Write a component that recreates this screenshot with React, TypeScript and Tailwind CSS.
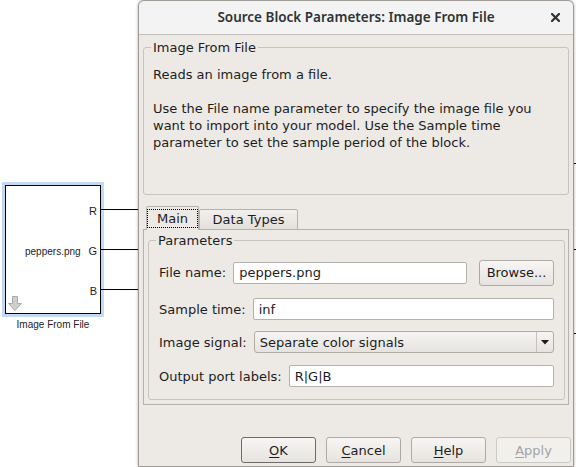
import React from "react";

const btn =
  "flex h-[26px] w-[75px] items-center justify-center rounded-[3px] border bg-gradient-to-b from-[#f7f6f4] to-[#e6e3df]";

function BlockArrow() {
  return (
    <svg width="14" height="15" viewBox="0 0 14 15">
      <path
        d="M4.5 0.5 H9.5 V7.5 H13.5 L7 14.5 L0.5 7.5 H4.5 Z"
        fill="#cfcfcf"
        stroke="#a9a9a9"
        strokeWidth="1"
      />
    </svg>
  );
}

function ImageFromFileBlock() {
  return (
    <div className="absolute left-[5px] top-[185px] flex flex-col items-center font-['Liberation_Sans',Arial,sans-serif] text-[10px] text-[#222]">
      <div className="relative h-[129px] w-[96px] border border-black bg-white ring-[3px] ring-[#c4daf4]">
        <span className="absolute right-[3px] top-[17px] text-[11px]">R</span>
        <span className="absolute right-[3px] top-[57px] text-[11px]">G</span>
        <span className="absolute right-[3px] top-[97px] text-[11px]">B</span>
        <span className="absolute left-[19px] top-[58px]">peppers.png</span>
        <div className="absolute bottom-[2px] left-[2px]">
          <BlockArrow />
        </div>
      </div>
      <div className="mt-[5px] leading-[12px]">Image From File</div>
    </div>
  );
}

function Row({ label, children, className = "" }: { label: string; children: React.ReactNode; className?: string }) {
  return (
    <div className={"flex items-center gap-[7px] " + className}>
      <span className="whitespace-nowrap">{label}</span>
      {children}
    </div>
  );
}

function Field({ value }: { value: string }) {
  return (
    <div className="flex h-[22px] min-w-0 flex-1 items-center rounded-[2px] border border-[#b5b2ad] bg-white pl-[5px]">
      {value}
    </div>
  );
}

export default function App() {
  return (
    <div className="relative h-[467px] w-[576px] overflow-hidden bg-white">
      <ImageFromFileBlock />

      {/* signal lines leaving the block */}
      <div className="absolute left-[101px] top-[209px] h-px w-[40px] bg-black" />
      <div className="absolute left-[101px] top-[249px] h-px w-[40px] bg-black" />
      <div className="absolute left-[101px] top-[289px] h-px w-[40px] bg-black" />

      {/* line stubs peeking out right of the dialog */}
      <div className="absolute left-[572px] top-[163px] h-px w-[4px] bg-black" />
      <div className="absolute left-[572px] top-[249px] h-px w-[4px] bg-black" />
      <div className="absolute left-[572px] top-[333px] h-px w-[4px] bg-black" />

      <div className="absolute left-[138px] top-0 flex h-[467px] w-[436px] flex-col rounded-t-[6px] border border-[#9e9b97] bg-[#edeae6] font-['DejaVu_Sans',sans-serif] text-[13px] leading-[17px] text-[#1d1d1d] shadow-[0_0_3px_rgba(0,0,0,0.35)]">
        <div className="relative flex h-[34px] shrink-0 items-center justify-center rounded-t-[6px] border-b border-[#c2bfbb] bg-[#f3f3f3]">
          <span className="font-['Noto_Sans',sans-serif] text-[13.5px] font-semibold text-[#2e3436]">
            Source Block Parameters: Image From File
          </span>
          <svg
            className="absolute right-[13px] top-[12px]"
            width="9"
            height="9"
            viewBox="0 0 9 9"
          >
            <path d="M1 1 L8 8 M8 1 L1 8" stroke="#2e3436" strokeWidth="2.2" strokeLinecap="square" />
          </svg>
        </div>

        <div className="flex flex-1 flex-col px-[4px] pt-[4px]">
          <fieldset className="h-[156px] rounded-[3px] border border-[#c7c4c0] pl-[9px] pt-[10px]">
            <legend className="-ml-[2px] px-[2px]">Image From File</legend>
            <p>Reads an image from a file.</p>
            <p className="mt-[17px]">
              Use the File name parameter to specify the image file you
              <br />
              want to import into your model. Use the Sample time
              <br />
              parameter to set the sample period of the block.
            </p>
          </fieldset>

          <div className="relative z-10 -mb-px mt-[11px] flex h-[24px] items-end pl-[3px]">
            <div className="flex h-[24px] w-[53px] flex-col rounded-t-[2px] border border-b-0 border-[#b5b2ae] bg-[#edeae6] px-0 pt-[2px]">
              <div className="flex h-[19px] items-center justify-center border border-dotted border-black">
                Main
              </div>
            </div>
            <div className="flex h-[21px] w-[99px] items-center justify-center rounded-t-[2px] border border-[#b5b2ae] bg-gradient-to-b from-[#f2f0ed] to-[#e3e0dc]">
              Data Types
            </div>
          </div>

          <div className="h-[176px] border border-[#b5b2ae] pl-[4px] pr-[3px] pt-[2px]">
            <fieldset className="h-[168px] rounded-[3px] border border-[#c7c4c0] pl-[10px] pr-[10px] pt-[10px]">
              <legend className="-ml-[3px] px-[2px]">Parameters</legend>
              <Row label="File name:" className="h-[27px]">
                <Field value="peppers.png" />
                <div className={btn + " ml-[5px] w-[74px] border-[#aeaba6]"}>Browse...</div>
              </Row>
              <Row label="Sample time:" className="mt-[12px]">
                <Field value="inf" />
              </Row>
              <Row label="Image signal:" className="mt-[11px]">
                <div className="flex h-[22px] flex-1 items-center rounded-[3px] border border-[#b0ada8] bg-gradient-to-b from-[#f6f5f3] to-[#e6e3df]">
                  <span className="flex-1 pl-[5px]">Separate color signals</span>
                  <div className="flex h-full w-[17px] items-center justify-center border-l border-[#c5c2be]">
                    <svg width="8" height="5" viewBox="0 0 8 5">
                      <path d="M0 0 H8 L4 4.5 Z" fill="#1d1d1d" />
                    </svg>
                  </div>
                </div>
              </Row>
              <Row label="Output port labels:" className="mt-[12px]">
                <Field value="R|G|B" />
              </Row>
            </fieldset>
          </div>

          <div className="flex-1" />

          <div className="mb-[3px] mr-[-2px] flex justify-end gap-[10px]">
            <div className={btn + " border-[#6d6b68]"}>
              <span>
                <u className="underline-offset-2">O</u>K
              </span>
            </div>
            <div className={btn + " border-[#aeaba6]"}>
              <span>
                <u className="underline-offset-2">C</u>ancel
              </span>
            </div>
            <div className={btn + " border-[#aeaba6]"}>
              <span>
                <u className="underline-offset-2">H</u>elp
              </span>
            </div>
            <div className="flex h-[26px] w-[75px] items-center justify-center rounded-[3px] border border-[#cdcac6] bg-[#f2f0ed] text-[#a3a3a3]">
              <span>
                <u className="underline-offset-2">A</u>pply
              </span>
            </div>
          </div>
        </div>
      </div>
    </div>
  );
}
